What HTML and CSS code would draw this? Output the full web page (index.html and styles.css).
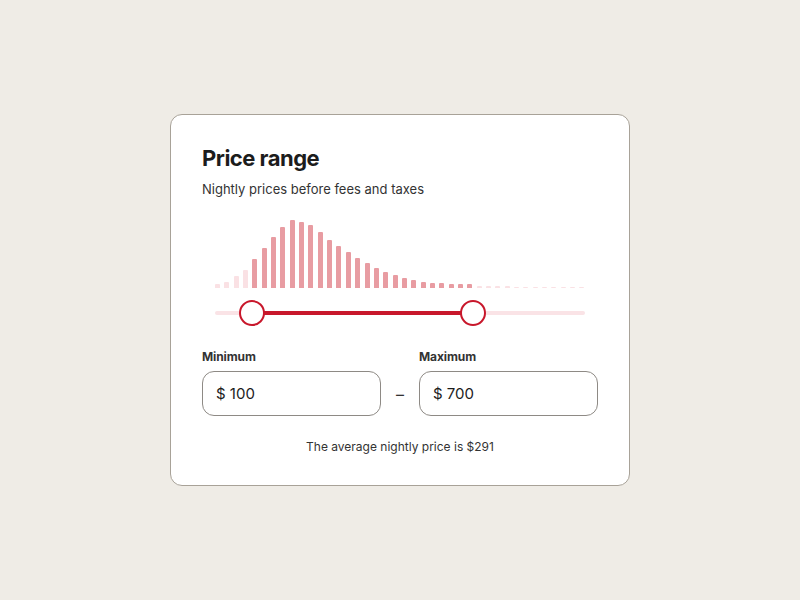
FILE: index.html
```html
<!DOCTYPE html>
<html lang="en">
<head>
<meta charset="utf-8">
<title>Price range</title>
<link rel="stylesheet" href="styles.css">
</head>
<body>
<main class="card">
  <h1 class="title">Price range</h1>
  <p class="subtitle">Nightly prices before fees and taxes</p>
  <div class="chart">
    <div class="histogram">
      <span class="bar faint" style="height:4px"></span>
      <span class="bar faint" style="height:6px"></span>
      <span class="bar faint" style="height:12px"></span>
      <span class="bar faint" style="height:18px"></span>
      <span class="bar" style="height:29px"></span>
      <span class="bar" style="height:40px"></span>
      <span class="bar" style="height:51px"></span>
      <span class="bar" style="height:61px"></span>
      <span class="bar" style="height:68px"></span>
      <span class="bar" style="height:66px"></span>
      <span class="bar" style="height:63px"></span>
      <span class="bar" style="height:56px"></span>
      <span class="bar" style="height:48px"></span>
      <span class="bar" style="height:42px"></span>
      <span class="bar" style="height:36px"></span>
      <span class="bar" style="height:30px"></span>
      <span class="bar" style="height:25px"></span>
      <span class="bar" style="height:20px"></span>
      <span class="bar" style="height:16px"></span>
      <span class="bar" style="height:13px"></span>
      <span class="bar" style="height:10px"></span>
      <span class="bar" style="height:8px"></span>
      <span class="bar" style="height:6px"></span>
      <span class="bar" style="height:5px"></span>
      <span class="bar" style="height:5px"></span>
      <span class="bar" style="height:4px"></span>
      <span class="bar" style="height:4px"></span>
      <span class="bar" style="height:4px"></span>
      <span class="bar faint" style="height:2px"></span>
      <span class="bar faint" style="height:2px"></span>
      <span class="bar faint" style="height:2px"></span>
      <span class="bar faint" style="height:2px"></span>
      <span class="bar faint" style="height:1px"></span>
      <span class="bar faint" style="height:1px"></span>
      <span class="bar faint" style="height:1px"></span>
      <span class="bar faint" style="height:1px"></span>
      <span class="bar faint" style="height:1px"></span>
      <span class="bar faint" style="height:1px"></span>
      <span class="bar faint" style="height:1px"></span>
      <span class="bar faint" style="height:1px"></span>
    </div>
    <div class="slider">
      <div class="track"></div>
      <div class="range" style="left:10%;width:59.7%"></div>
      <span class="thumb" style="left:10%"></span>
      <span class="thumb" style="left:69.7%"></span>
    </div>
  </div>
  <div class="fields">
    <div class="field">
      <span class="label">Minimum</span>
      <div class="input">$ 100</div>
    </div>
    <span class="dash">–</span>
    <div class="field">
      <span class="label">Maximum</span>
      <div class="input">$ 700</div>
    </div>
  </div>
  <p class="avg">The average nightly price is $291</p>
</main>
</body>
</html>
```

FILE: styles.css
```css
* { box-sizing: border-box; }

html, body {
  margin: 0;
  padding: 0;
}

body {
  width: 800px;
  height: 600px;
  background: #efece6;
  display: flex;
  align-items: center;
  justify-content: center;
  font-family: Inter, "Liberation Sans", sans-serif;
  color: #222222;
}

.card {
  width: 460px;
  height: 372px;
  background: #ffffff;
  border: 1px solid #a8a298;
  border-radius: 12px;
  padding: 28px 31px 0;
  display: flex;
  flex-direction: column;
}

.title {
  margin: 0;
  font-size: 22px;
  line-height: 30px;
  font-weight: 700;
  letter-spacing: -0.5px;
  color: #1c1c1c;
}

.subtitle {
  margin: 6px 0 0;
  font-size: 13px;
  line-height: 20px;
  color: #333333;
}

.chart {
  margin: 19px 13px 0;
}

.histogram {
  height: 70px;
  display: flex;
  align-items: flex-end;
  justify-content: space-between;
}

.bar {
  width: 5px;
  background: #e89ca2;
  border-radius: 1px 1px 0 0;
}

.bar.faint {
  background: #fae1e4;
}

.slider {
  position: relative;
  height: 26px;
  margin-top: 12px;
  display: flex;
  align-items: center;
}

.track {
  width: 100%;
  height: 4px;
  border-radius: 2px;
  background: #fae3e6;
}

.range {
  position: absolute;
  top: 11px;
  height: 4px;
  background: #c8172b;
}

.thumb {
  position: absolute;
  top: 0;
  width: 26px;
  height: 26px;
  margin-left: -13px;
  border-radius: 50%;
  background: #ffffff;
  border: 2.5px solid #c8172b;
}

.fields {
  margin-top: 23px;
  display: flex;
  align-items: flex-end;
}

.field {
  width: 179px;
  display: flex;
  flex-direction: column;
  gap: 6px;
}

.label {
  font-size: 12px;
  line-height: 16px;
  font-weight: 700;
  letter-spacing: -0.1px;
  color: #333333;
}

.input {
  height: 45px;
  border: 1px solid #8e8a85;
  border-radius: 12px;
  padding: 0 13px;
  display: flex;
  align-items: center;
  font-size: 15px;
  color: #1c1c1c;
}

.dash {
  flex: 1;
  height: 45px;
  display: flex;
  align-items: center;
  justify-content: center;
  font-size: 16px;
  color: #333333;
}

.avg {
  margin: 21px 0 0;
  text-align: center;
  font-size: 12px;
  line-height: 20px;
  color: #333333;
}
```
